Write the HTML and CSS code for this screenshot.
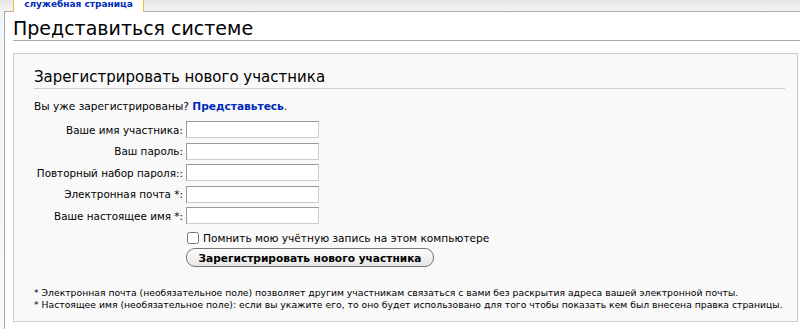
FILE: index.html
```html
<!DOCTYPE html>
<html lang="ru">
<head>
	<meta charset="UTF-8">
	<title>Представиться системе</title>
	<link rel="stylesheet" href="styles.css">
</head>
<body>
	<!-- вкладки над статьёй -->
	<div class="tabs">
		<span class="tab">служебная страница</span>
	</div>

	<div class="content">
		<h1 class="first-heading">Представиться системе</h1>

		<div class="userlogin">
			<h2>Зарегистрировать нового участника</h2>
			<p class="already">Вы уже зарегистрированы? <a href="#">Представьтесь</a>.</p>

			<table class="login-form">
				<tr>
					<td class="label">Ваше имя участника:</td>
					<td><input type="text" class="field"></td>
				</tr>
				<tr>
					<td class="label">Ваш пароль:</td>
					<td><input type="password" class="field"></td>
				</tr>
				<tr>
					<td class="label">Повторный набор пароля::</td>
					<td><input type="password" class="field"></td>
				</tr>
				<tr>
					<td class="label">Электронная почта *:</td>
					<td><input type="text" class="field"></td>
				</tr>
				<tr>
					<td class="label">Ваше настоящее имя *:</td>
					<td><input type="text" class="field"></td>
				</tr>
				<tr>
					<td></td>
					<td class="remember">
						<label><input type="checkbox" class="check"> Помнить мою учётную запись на этом компьютере</label>
					</td>
				</tr>
				<tr>
					<td></td>
					<td><button class="submit">Зарегистрировать нового участника</button></td>
				</tr>
			</table>

			<div class="notes">
				<p>* Электронная почта (необязательное поле) позволяет другим участникам связаться с вами без раскрытия адреса вашей электронной почты.</p>
				<p>* Настоящее имя (необязательное поле): если вы укажите его, то оно будет использовано для того чтобы показать кем был внесена правка страницы.</p>
			</div>
		</div>
	</div>
</body>
</html>
```

FILE: styles.css
```css
*{
	margin: 0px;
	padding: 0px;
}
body{
	background: linear-gradient(to bottom, #e6e6e6, #f3f3f3 11px, #f9f9f9);
	font-family: "DejaVu Sans", sans-serif;
	color: black;
	overflow: hidden;
}

/*вкладки*/
.tabs{
	height: 11px;
	padding-left: 13px;
	position: relative;
	z-index: 2;
}
.tab{
	display: inline-block;
	width: 129px;
	height: 12px;
	background-color: white;
	border-left: 1px solid #fabd23;
	border-right: 1px solid #fabd23;
	color: #002bb8;
	font-size: 9px;
	font-weight: bold;
	line-height: 9px;
	text-align: center;
	vertical-align: top;
}

/*основная область*/
.content{
	margin-left: 4px;
	background-color: white;
	border-top: 1px solid #aaa;
	border-left: 1px solid #aaa;
	padding: 0px 0px 0px 8px;
	height: 330px;
}
.first-heading{
	font-size: 19px;
	font-weight: normal;
	line-height: 24px;
	padding-top: 4px;
	border-bottom: 1px solid #aaa;
}

/*рамка регистрации*/
.userlogin{
	margin-top: 12px;
	margin-right: 2px;
	background-color: #f9f9f9;
	border: 1px solid #ccc;
	padding: 12px 12px 10px 20px;
}
.userlogin h2{
	font-size: 15px;
	font-weight: normal;
	line-height: 22px;
	border-bottom: 1px solid #ccc;
}
.already{
	font-size: 10.6px;
	margin-top: 10px;
	line-height: 14px;
}
.already a{
	color: #002bb8;
	font-weight: bold;
	text-decoration: none;
}

/*таблица полей*/
.login-form{
	border-collapse: collapse;
	margin-top: 6px;
	font-size: 10.6px;
}
.login-form td{
	padding: 2px 0px 2.5px;
}
.label{
	font-size: 10.4px;
	text-align: right;
	white-space: nowrap;
	width: 149px;
	padding-right: 3px !important;
}
.field{
	display: block;
	box-sizing: border-box;
	width: 133px;
	height: 17px;
	border: 1px solid #999;
	border-color: #999 #ccc #ccc #999;
	background-color: white;
	font-size: 10px;
}
.remember{
	padding-top: 5px !important;
}
.remember label{
	display: flex;
	align-items: center;
	gap: 4px;
}
.check{
	width: 12px;
	height: 12px;
	margin: 0px 0px 0px 1px;
}
.submit{
	font-family: "DejaVu Sans", sans-serif;
	font-size: 10.6px;
	font-weight: bold;
	padding: 2px 11px;
	height: 19px;
	width: 248px;
	background: linear-gradient(to bottom, #fdfdfd, #e6e6e6);
	border: 1px solid #777;
	border-radius: 9px;
	color: black;
}

/*примечания*/
.notes{
	margin-top: 17px;
	font-size: 9.25px;
	line-height: 12px;
	white-space: nowrap;
}
```
